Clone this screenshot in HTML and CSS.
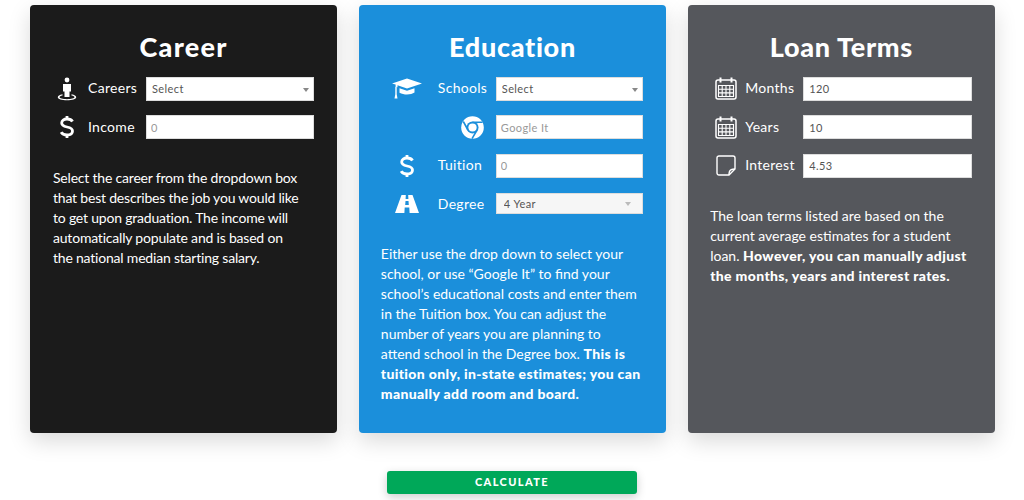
FILE: index.html

```html
<!DOCTYPE html>
<html lang="en">
	<head>
		<meta charset="UTF-8">
		<meta name="viewport" content="width=device-width, initial-scale=1.0">
		<title>Student Loan Calculator</title>
		<link rel="stylesheet" href="styles.css">
	</head>
	<body>
	<div class="cards">
		<div class="card career">
			<h2>Career</h2>
			<div class="form">
				<div class="icon">
					<svg width="20" height="24" viewBox="0 0 20 24" fill="#fff"><circle cx="10" cy="3" r="2.400"/><path d="M6 7h8v7.500h-1.500V20h-5v-5.500H6z"/><path d="M5.500 17.300C2.500 18 .8 19 .8 20.300c0 1.800 4 3 9.200 3s9.200-1.200 9.200-3c0-1.300-1.700-2.300-4.700-3v1.300c2 .4 3 1 3 1.700 0 .9-3.200 1.900-7.500 1.900s-7.500-1-7.500-1.900c0-.7 1-1.300 3-1.700z"/></svg>
				</div>
				<label>Careers</label>
				<div class="select"><select><option>Select</option></select></div>
				<div class="icon">
					<svg width="14" height="24" viewBox="0 0 14 24" fill="none" stroke="#fff" stroke-width="2.800"><path d="M12.500 6.500C11.500 4.700 9.500 4 7 4 3.800 4 1.700 5.500 1.700 8c0 2.700 2.400 3.400 5.300 4 3 .6 5.500 1.300 5.500 4 0 2.600-2.300 4-5.500 4-2.700 0-4.800-.9-5.800-2.800"/><path d="M7 1v3M7 20v3"/></svg>
				</div>
				<label>Income</label>
				<input type="text" placeholder="0">
			</div>
			<p>Select the career from the dropdown box that best describes the job you would like to get upon graduation. The income will automatically populate and is based on the national median starting salary.</p>
		</div>
		<div class="card education">
			<h2>Education</h2>
			<div class="form">
				<div class="icon">
					<svg width="30" height="21" viewBox="0 0 30 21" fill="#fff"><path d="M15 .5 30 5.500l-15 5-9.500-3.200v2L3.600 8.700V6.600L0 5.500z"/><path d="M7.500 10.200 15 12.700l7.500-2.500v4.300c-1.800 1.300-4.500 2-7.500 2-2.700 0-5.200-.6-7.500-1.800z"/><path d="M3.300 8.800h1.400v7.500l.8 4.200H2.500l.8-4.200z"/></svg>
				</div>
				<label>Schools</label>
				<div class="select"><select><option>Select</option></select></div>
				<div class="blank"></div>
				<div class="chrome">
					<svg width="23" height="23" viewBox="0 0 24 24"><circle cx="12" cy="12" r="11.800" fill="#fff"/><circle cx="12" cy="12" r="6.300" fill="#1b8fdb"/><circle cx="12" cy="12" r="4.300" fill="#fff"/><path d="M12 5.700h10.500v1.600H12zM6.500 15l-4.800-8.800 1.400-.9 5 8.700zM17.500 15l-5.300 9-1.400-.8 5.300-9z" fill="#1b8fdb"/></svg>
				</div>
				<input type="text" placeholder="Google It">
				<div class="icon">
					<svg width="14" height="24" viewBox="0 0 14 24" fill="none" stroke="#fff" stroke-width="2.800"><path d="M12.500 6.500C11.500 4.700 9.500 4 7 4 3.800 4 1.700 5.500 1.700 8c0 2.700 2.400 3.400 5.300 4 3 .6 5.500 1.300 5.500 4 0 2.600-2.300 4-5.500 4-2.700 0-4.800-.9-5.800-2.800"/><path d="M7 1v3M7 20v3"/></svg>
				</div>
				<label>Tuition</label>
				<input type="text" placeholder="0">
				<div class="icon">
					<svg width="24" height="18" viewBox="0 0 24 18" fill="#fff"><path d="M6.500 0h4.300l-.2 4h2.800l-.2-4h4.300L24 18h-9.400l-.3-5.500H9.700L9.400 18H0zM10.500 6l-.3 4h3.600l-.3-4z"/></svg>
				</div>
				<label>Degree</label>
				<div class="select degree"><select><option>4 Year</option></select></div>
			</div>
			<p>Either use the drop down to select your school, or use “Google It” to find your school’s educational costs and enter them in the Tuition box. You can adjust the number of years you are planning to attend school in the Degree box. <b>This is tuition only, in-state estimates; you can manually add room and board.</b></p>
		</div>
		<div class="card terms">
			<h2>Loan Terms</h2>
			<div class="form">
				<div class="icon">
					<svg width="22" height="23" viewBox="0 0 22 23" fill="none" stroke="#fff" stroke-width="1.500"><rect x="1" y="3" width="20" height="19" rx="2"/><path d="M5.500 .5v5M16.500 .5v5" stroke-width="2"/><path d="M3.500 8.500h15v11h-15zM3.500 12.200h15M3.500 15.900h15M7.200 8.500v11M11 8.500v11M14.800 8.500v11" stroke-width="1.100"/></svg>
				</div>
				<label>Months</label>
				<input type="text" value="120">
				<div class="icon">
					<svg width="22" height="23" viewBox="0 0 22 23" fill="none" stroke="#fff" stroke-width="1.500"><rect x="1" y="3" width="20" height="19" rx="2"/><path d="M5.500 .5v5M16.500 .5v5" stroke-width="2"/><path d="M3.500 8.500h15v11h-15zM3.500 12.200h15M3.500 15.900h15M7.200 8.500v11M11 8.500v11M14.800 8.500v11" stroke-width="1.100"/></svg>
				</div>
				<label>Years</label>
				<input type="text" value="10">
				<div class="icon">
					<svg width="20" height="21" viewBox="0 0 20 21" fill="none" stroke="#fff" stroke-width="1.400"><path d="M13 20H3a2 2 0 0 1-2-2V3a2 2 0 0 1 2-2h14a2 2 0 0 1 2 2v11z"/><path d="M13 20c0-1 0-2 .5-3.500.5-1.500 3-2.500 5.500-2.500"/></svg>
				</div>
				<label>Interest</label>
				<input type="text" value="4.53">
			</div>
			<p>The loan terms listed are based on the current average estimates for a student loan. <b>However, you can manually adjust the months, years and interest rates.</b></p>
		</div>
	</div>
	<div class="actions">
		<button>CALCULATE</button>
	</div>
	</body>
</html>
```

FILE: styles.css

```css
body {
	margin: 0;
	height: 500px;
	overflow: hidden;
	background-color: #fff;
	font-family: "Lato", "Liberation Sans", sans-serif;
}

.cards {
	display: grid;
	grid-template-columns: 1fr 1fr 1fr;
	column-gap: 21.5px;
	padding: 5px 29px 0 30px;
}

.card {
	height: 428px;
	box-sizing: border-box;
	padding: 0 23px;
	border-radius: 4px;
	color: #fff;
	box-shadow: 0 8px 22px rgba(0, 0, 0, .15);
}

.career {
	background-color: #1b1b1b;
}

.education {
	background-color: #1b8fdb;
	padding: 0 22px;
}

.terms {
	background-color: #55575c;
	padding: 0 22.500px;
}

h2 {
	margin: 0;
	padding-top: 26px;
	height: 45.700px;
	font-size: 27px;
	line-height: 32px;
	font-weight: 900;
	letter-spacing: .7px;
	text-align: center;
}

.career h2 {
	letter-spacing: 1.300px;
}

.form {
	display: grid;
	grid-auto-rows: 24px;
	row-gap: 14.500px;
	align-items: center;
}

.career .form {
	grid-template-columns: 35px 58px 168px;
}

.terms .form {
	grid-template-columns: 35px 58px 168.500px;
}

.education .form {
	grid-template-columns: 57px 58px 147px;
}

.icon {
	display: flex;
	justify-content: center;
	align-items: center;
}

.career .icon {
	width: 28px;
}

.education .icon {
	width: 52px;
}

.terms .icon {
	width: 32px;
}

.chrome {
	display: flex;
	justify-self: end;
	margin-right: 12px;
}

label {
	margin-top: -2px;
	font-size: 14px;
	letter-spacing: .3px;
}

input,
select {
	display: block;
	width: 100%;
	height: 24px;
	box-sizing: border-box;
	margin: 0;
	padding: 0 5px;
	border: 1px solid #ddd;
	border-radius: 0;
	background-color: #fff;
	color: #555;
	font-family: "Lato", "Liberation Sans", sans-serif;
	font-size: 11px;
	letter-spacing: .4px;
	outline: none;
	appearance: none;
}

input::placeholder {
	color: #999;
	opacity: 1;
}

.career input,
.education input {
	padding: 0 4px;
}

.select {
	position: relative;
}

.select::after {
	content: "";
	position: absolute;
	top: 11px;
	right: 5px;
	border-left: 3px solid transparent;
	border-right: 3px solid transparent;
	border-top: 4px solid #888;
}

.degree {
	align-self: start;
	height: 21px;
	margin-top: .5px;
}

.degree select {
	height: 21px;
	padding: 0 7px;
	background-color: #f6f6f6;
}

.degree::after {
	top: 9px;
	right: 12px;
	border-top-color: #bbb;
}

p {
	margin: 28.500px 0 0;
	font-size: 14px;
	line-height: 20px;
}

.career p {
	margin-right: 10px;
	letter-spacing: -.2px;
}

.education p {
	margin: 28px 2px 0 0;
}

b {
	font-weight: 900;
	letter-spacing: .35px;
}

.actions {
	display: flex;
	justify-content: center;
	padding-top: 38px;
}

button {
	width: 250px;
	height: 23px;
	padding: 0 0 2px;
	border: none;
	border-radius: 3px;
	background-color: #00a859;
	color: #fff;
	font-family: "Lato", "Liberation Sans", sans-serif;
	font-size: 11px;
	font-weight: 900;
	letter-spacing: 1.400px;
	box-shadow: 0 3px 10px rgba(0, 0, 0, .2);
}
```
